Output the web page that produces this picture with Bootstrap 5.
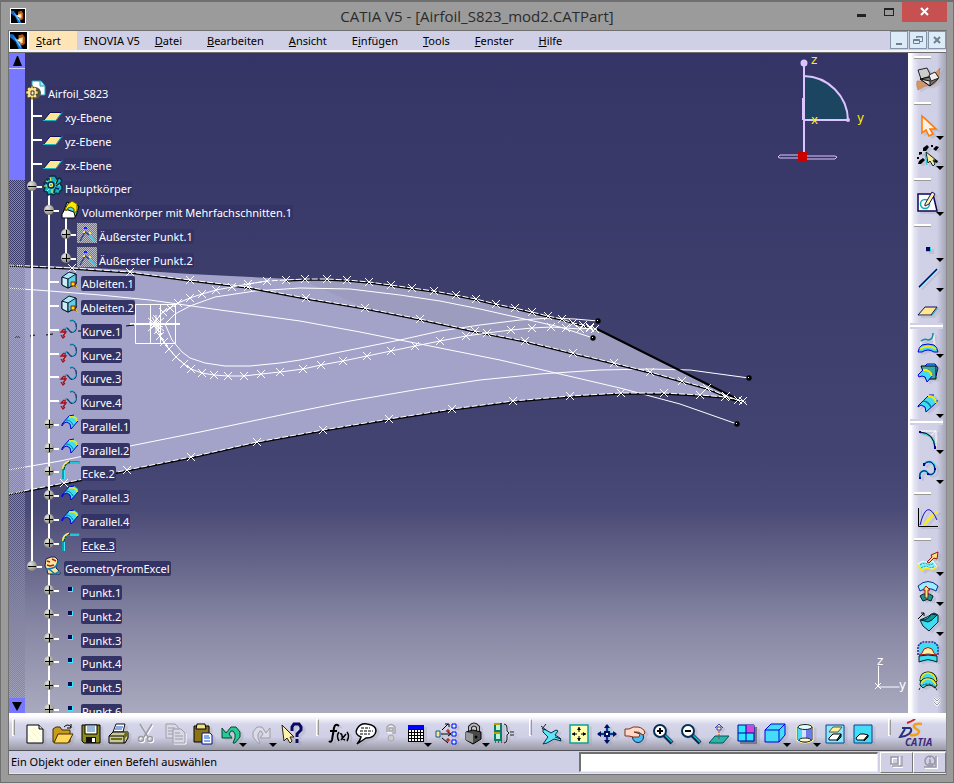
<!DOCTYPE html>
<html lang="de">
<head>
<meta charset="utf-8">
<meta name="viewport" content="width=device-width, initial-scale=1">
<title>CATIA V5 - [Airfoil_S823_mod2.CATPart]</title>
<link rel="stylesheet" href="https://cdn.jsdelivr.net/npm/bootstrap@5.3.0/dist/css/bootstrap.min.css">
<style>
:root{--lav:#cfcfe5;--navy:#333366;--frame:#9b9b9b}
body{font-family:"Noto Sans","Open Sans",sans-serif;font-size:11px;line-height:16px;color:#000;background:var(--frame)}
button{color:inherit;font:inherit}
symbol{overflow:visible}
.app-window{border:1px solid #6f6f6f;border-top-width:2px;background:var(--frame);padding:0 6px 7px 7px}
.titlebar{height:28px}
.titlebar h1{font:15px/28px "Open Sans",sans-serif;color:#2b2b2b;padding-left:80px}
.app-mark{width:16px;height:16px;border:1px solid #fff;margin:6px 0 0 2px}
.win-ctl{height:20px;width:27px}
.win-close{width:45px;background:#c75050;color:#fff}
.client{border:1px solid #707070;border-right-color:#8a8a8a;background:var(--lav)}
.menubar{height:21px;background:var(--lav);border-bottom:2px solid #f4f4fa}
.menubar .menu-item{line-height:19px;padding:0 12px 0 13px;color:#000;text-decoration:none}
.menubar .menu-item.active{background:#ffe4b5;padding:0 16px 0 7px}
.menubar .menu-item.tight{padding:0 2px 0 7px}
.mdi-group{gap:1px}
.mdi{width:18px;height:18px;border:1px solid #8596a8;background:#dcebf7}
.work{border-top:1px solid #6d6d6d}
.viewport{background:linear-gradient(#343466 0%,#3d3d6c 33%,#444473 62%,#4a4a77 69%,#6b6b8f 79%,#8888a5 87%,#a9a9bf 100%)}
.scene{left:0;top:0}
.scroller{width:16px;background:conic-gradient(#7a7aff 25%,transparent 0 50%,#7a7aff 0 75%,transparent 0) 0 0/2px 2px}
.scroller button{height:15px;background:#7777ff;border:0}
.scroller .thumb{height:112px;background:#7777ff;border-top:1px solid #d0d0ff}
.tree{padding:29px 0 0 1px}
.tree li{height:24px}
.tree li:nth-child(4n){height:23px}
.rail,.elbow,.blank{width:17px;flex:none;align-self:stretch}
.rail{background:linear-gradient(#fff,#fff) 5px 0/2px 100% no-repeat}
.elbow{background:linear-gradient(#fff,#fff) 5px 0/2px 100% no-repeat,linear-gradient(#fff,#fff) 5px 9px/11px 2px no-repeat;padding:4px 0 0 1px}
.elbow.last{background-size:2px 10px,11px 2px}
.knob{width:10px;height:10px;border-radius:5px;background:linear-gradient(#000,#000) center/8px 1px no-repeat,radial-gradient(circle at 35% 30%,#e4e4dc,#999990 60%,#66665e)}
.knob.plus{background:linear-gradient(#000,#000) 1px 5px/8px 1px no-repeat,linear-gradient(#000,#000) 5px 1px/1px 8px no-repeat,radial-gradient(circle at 35% 30%,#e4e4dc,#999990 60%,#66665e)}
.node-icon{width:21px;height:24px;flex:none;overflow:visible}
.node-open{background:linear-gradient(#fff,#fff) 5px 16px/2px 8px no-repeat}
.node-label{margin-top:4px;height:15px;padding:0 1px;border-radius:2px;background:var(--navy);color:#fff;white-space:nowrap}
.sidebar{width:38px;padding-left:2px;background:linear-gradient(90deg,#fff 0 3px,#e6e6f4 6px,#d0d0e6 12px,#cfcfe6 29px,#a5a5b9 38px)}
.tool{position:relative;width:28px;height:30px;flex:none}
.tool svg{width:22px;height:22px;display:block;margin:auto;overflow:visible;filter:drop-shadow(3px 2px 0 rgba(140,140,150,.22))}
.tool.grey svg{filter:none}
.tool.slim{width:22px}
.first-tool{height:34px}
.drop::after{content:"";position:absolute;right:-2px;bottom:2px;border:4px solid transparent;border-top-color:#000;border-bottom:0}
.sidebar .drop::after{bottom:1px}
.grip-h{height:16px;flex:none;display:flex;align-items:center;padding-left:4px}
.grip-h::before{content:"";width:17px;height:3px;background:#fff;border-bottom:1px solid #999}
.grip-top{height:8px}
.split-h{height:6px;flex:none;border-top:2px solid #cfcfe6;border-bottom:2px solid #cfcfe6;background:#fff;width:33px}
.toolbar{height:38px;padding-top:6px;background:linear-gradient(#fff 0,#fff 3px,#d6d6ea 11px,#cfcfe5 24px,#9a9aa8 37px);border-bottom:1px solid #505058}
.toolbar .drop{margin-right:2px}
.grip-v{width:19px;flex:none;padding-left:11px}
.grip-v::before{content:"";display:block;width:3px;height:17px;border:1px solid #fff;border-right-color:#999}
.grip-first{width:12px;padding-left:3px}
.statusbar{height:23px;border-bottom:1px solid #e6e6f2}
.statusbar label{line-height:22px;padding-left:2px}
.cmd{width:299px;height:20px;border:1px solid #eee;border-top:2px solid #707070;border-left:2px solid #707070;background:#fff;border-radius:0}
.stat-btn{width:33px;height:21px;background:var(--lav);border:1px solid #fff;border-right-color:#777;border-bottom-color:#777}
.stat-first{margin-left:2px}
</style>
<script src="https://cdn.jsdelivr.net/npm/bootstrap@5.3.0/dist/js/bootstrap.bundle.min.js"></script>
</head>
<body>
<svg width="0" height="0" class="position-absolute" aria-hidden="true">
<defs>
<symbol id="comet" viewBox="0 0 16 16"><path fill="#000" d="M0 0h16v16H0z"/><path fill="#1668c8" d="M0 2h3l3 4 4 6 2 4H8L5 9 0 5z"/><path fill="#6fd0ff" d="M3 4l3 3 4 5v3L6 9z"/><path fill="#b3561c" d="M8 3l4-1 2 3v6l-3 2-3-4z"/><path fill="#ffcf7a" d="M8 6l4-1v5l-2 1z"/><path fill="#fff" d="M6 7h5v2H8z"/></symbol>
<symbol id="n-part"><path d="M6-1h9l4 5v9H9V6H6z" fill="#fff" stroke="#19a6bb"/><path d="M14-1v5h5" fill="#b8e8f0" stroke="#19a6bb"/><circle cx="9" cy="11" r="6" fill="#55554a"/><path d="M5 4h2v2l2-1 2 2-1 2h2v3h-2l1 3-2 1-2-1v2H5v-2l-3 1-1-2 1-2H0V9h2L1 7l2-2 2 1z" fill="#ffe48a" stroke="#3d3208" stroke-width=".6"/><path d="M5 9h3v4H5z" fill="#fff6c0" stroke="#333"/></symbol>
<symbol id="n-plane"><path d="M1 14L7 7h11l-5 7z" fill="#ffe68f"/><path d="M1 14L7 6.500h11" fill="none" stroke="#111155"/><path d="M0 14.500h13l6-8" fill="none" stroke="#13b5c6"/></symbol>
<symbol id="n-body"><path d="M7-1h5l2 3 3-1 2 3-2 3 2 2v4l-2 1-1 3-3-1-2 2-3-1-3 1-1-3-3-1 1-4-1-4h3V2h3z" fill="#17b5b8" stroke="#06304e" stroke-width="1.500"/><path d="M7 0l1 4M3 4l4 2M1 9h4M4 14l3-3M9 16v-4M14 3l-2 4M17 8h-4" stroke="#fff25a" fill="none"/><path d="M15 2l-2 5M17 6l-4 3M16 12l-4-1M11 16l1-4" stroke="#042a56" fill="none" stroke-width="1.500"/><circle cx="8" cy="8" r="3" fill="#ffe94f" stroke="#042a56" stroke-width="1.500"/><circle cx="8" cy="8" r="1" fill="#2aa"/></symbol>
<symbol id="n-loft"><path d="M7 1l8 3 4 1-3 10H2z" fill="#3fd9f0" stroke="#000"/><path d="M2 13l3-5 9 3 1 4v2H2z" fill="#fff" stroke="#000"/><path d="M5 8l3-5 4-3 5 3v7l-3 2V8l-3-2-3 1-2 3z" fill="#ffe600" stroke="#665800"/></symbol>
<symbol id="n-extremum"><path d="M0-2h20v20H0z" fill="url(#dither)" shape-rendering="crispEdges"/><path d="M3 16L8 7l10 8" fill="none" stroke="#32408a" stroke-width="1.500"/><path d="M12 10l6 6" stroke="#39d1ef" stroke-width="2"/><path d="M6 6h2v2H6zM12 7h2v2h-2z" fill="#ffe26d"/><path d="M7 2h3v2H7z" fill="#1a1aff"/></symbol>
<pattern id="dither" width="2" height="2" patternUnits="userSpaceOnUse"><path fill="#777787" d="M0 0h2v2H0z"/><path fill="#bcbcc4" d="M0 0h1v1H0zM1 1h1v1H1z"/></pattern>
<symbol id="n-derive"><path d="M2 5l7-5 7 2v10l-8 4-6-3z" fill="#a9e6f6" stroke="#001828"/><path d="M2 5l6 2v9l-6-3z" fill="#cdeef6" stroke="#001828"/><path d="M8 7l8-5v10l-8 4z" fill="#5fcfee" stroke="#001828"/><path d="M11 10h4v4h-4z" fill="#ffe100" stroke="#7d1d00"/><path d="M14 13l4 4" stroke="#c10"/><path d="M16 14l2 3" stroke="#fd0"/></symbol>
<symbol id="n-curve"><path d="M10 1q4-2 6 3 1 5-1 7-4 3-6-1-2-3-4-1" fill="none" stroke="#12336e" stroke-width="1.300"/><path d="M10 0q5-1 6 3M16 7q-1 5-4 5M5 9l2-1" fill="none" stroke="#26c5df"/><path d="M4 9l-3 3h5l-3 4M1 15l2 3 2-2M5 9v3" fill="none" stroke="#a31019" stroke-width="1.300"/></symbol>
<symbol id="n-parallel"><path d="M2 9L9 1l5-1 4 3v3l-7 8-1-5-3-2-3 1z" fill="#3fdcf4"/><path d="M18 6l-7 8-1-5-3-2-3 1-2 3v-2L9 1l5-1" fill="none" stroke="#0000d8"/><path d="M9 2q7-1 8 4" fill="none" stroke="#ffe600" stroke-width="1.500"/><path d="M6 5q5 0 7 5" fill="none" stroke="#087b96"/></symbol>
<symbol id="n-corner"><path d="M3.500 17V6q1-5 5-5.500h11" fill="none" stroke="#0c9fa6" stroke-width="3"/><path d="M4.500 17V7M10 1h9" fill="none" stroke="#3ee8ff"/><path d="M3 7Q3 1 9-.5" fill="none" stroke="#ffe86e" stroke-width="2"/><path d="M4 8q0-6 6-8" fill="none" stroke="#111" stroke-dasharray="3 1"/></symbol>
<symbol id="n-set"><path d="M3 2l5-2h4l3 3-2 8 4 4v2H5l-1-4-2-4z" fill="#ffe49b" stroke="#17204e"/><path d="M4 4l3 1M9 2l4 2M4 8l3 1 4-1" fill="none" stroke="#b11f1f" stroke-width="1.500"/><path d="M3 12q7 0 10-3l4-7M6 12l6 5 5-3" fill="none" stroke="#0c7cad" stroke-width="1.500"/></symbol>
<symbol id="n-point"><path d="M8 6h5v5H8z" fill="#3ee8ff"/><path d="M8 6h4v4H8z" fill="#0b0b55"/></symbol>
<marker id="cross" viewBox="-5 -5 10 10" refX="0" refY="0" markerWidth="10" markerHeight="10" markerUnits="userSpaceOnUse"><path d="M-4-4L4 4M-4 4L4-4" stroke="#fff" fill="none"/></marker>
<marker id="blob" viewBox="-4 -4 8 8" refX="0" refY="0" markerWidth="8" markerHeight="8" markerUnits="userSpaceOnUse"><circle r="2.700"/><path fill="#fff" d="M-1-1h1v1h-1z"/></marker>
</defs>
</svg>

<div class="app-window vh-100 d-flex flex-column">
  <header class="titlebar d-flex align-items-start flex-shrink-0">
    <svg class="app-mark flex-shrink-0" viewBox="0 0 16 16" role="img" aria-label="CATIA"><use href="#comet"/></svg>
    <h1 class="m-0 flex-grow-1 text-center">CATIA V5 - [Airfoil_S823_mod2.CATPart]</h1>
    <div class="d-flex">
      <button class="win-ctl btn rounded-0 p-0 border-0" aria-label="Minimieren"><svg width="10" height="12" class="d-block m-auto"><path d="M0 8h9v3H0z" fill="#222"/></svg></button>
      <button class="win-ctl btn rounded-0 p-0 border-0" aria-label="Maximieren"><svg width="12" height="12" class="d-block m-auto"><path d="M1 2h10v8H1z" fill="#222"/><path d="M2 4h8v5H2z" fill="#9b9b9b"/></svg></button>
      <button class="win-ctl win-close btn rounded-0 p-0 border-0" aria-label="Schließen"><svg width="10" height="10" class="d-block m-auto"><path d="M1 1l7 7M8 1L1 8" stroke="#fff" stroke-width="2"/></svg></button>
    </div>
  </header>

  <div class="client flex-grow-1 d-flex flex-column overflow-hidden">
    <nav class="menubar d-flex align-items-stretch flex-shrink-0" aria-label="Hauptmenü">
      <svg width="20" height="19" viewBox="0 0 20 19" role="img" aria-label="Dokument"><path fill="#fff" d="M0 0h20v19H0z"/><use href="#comet" x="1" y="1" width="17" height="17"/></svg>
      <a class="menu-item active" href="#"><u>S</u>tart</a>
      <a class="menu-item tight" href="#">ENOVIA V5</a>
      <a class="menu-item" href="#"><u>D</u>atei</a>
      <a class="menu-item" href="#"><u>B</u>earbeiten</a>
      <a class="menu-item" href="#"><u>A</u>nsicht</a>
      <a class="menu-item" href="#">E<u>i</u>nfügen</a>
      <a class="menu-item" href="#"><u>T</u>ools</a>
      <a class="menu-item" href="#"><u>F</u>enster</a>
      <a class="menu-item" href="#"><u>H</u>ilfe</a>
      <div class="mdi-group ms-auto d-flex">
        <button class="mdi p-0" aria-label="Dokument minimieren"><svg width="12" height="12" class="d-block m-auto"><path d="M3 9h6v2H3z" fill="#6d8191"/></svg></button>
        <button class="mdi p-0" aria-label="Dokument wiederherstellen"><svg width="12" height="12" class="d-block m-auto" fill="none" stroke="#6d8191"><path d="M4.500 4V2.500h6v5H8M4 3h7"/><path d="M1.500 5.500h6v4h-6zM1 6.500h7"/></svg></button>
        <button class="mdi p-0" aria-label="Dokument schließen"><svg width="12" height="12" class="d-block m-auto"><path d="M3 3l6 6M9 3L3 9" stroke="#6d8191" stroke-width="2"/></svg></button>
      </div>
    </nav>

    <div class="work flex-grow-1 d-flex overflow-hidden">
      <main class="viewport position-relative flex-grow-1 d-flex overflow-hidden">
        <svg class="scene position-absolute w-100 h-100" viewBox="9 53 899 660" preserveAspectRatio="xMinYMin slice" role="img" aria-label="Tragflächenprofil S823">
          <path d="M8 265L70 267 130 270 190 274 290 279 327 279 369 282 412 288 456 295 496 304 548 316 597 329 741 401 700 395 664 393 621 393 570 396 513 401 452 409 389 419 323 430 257 443 191 457 127 470 64 483 8 494z" fill="#a3a3c9"/>
          <path d="M300 279L369 282 456 295 548 316 597 329 741 401 650 373 573 353 475 331 365 308z" fill="#9c9cbf"/>
          <g fill="none" stroke="#fff">
            <polyline points="8,288 50,291 100,295 150,300 220,310 300,321 360,332 425,345 500,360 560,374 620,388 680,404 737,424" marker-end="url(#blob)"/>
            <polyline points="8,470 60,461 130,446 200,432 300,411 350,401 420,389 480,380 540,374 600,370 650,369 690,370 749,378" marker-end="url(#blob)"/>
            <path d="M593 338L560 327 520 318 480 309 440 301 400 295 350 289 300 288 255 291 215 297 190 306 175 314 165 324 172 340 182 352 190 358 205 363 225 366 250 366 280 363 300 360 350 350 400 340 440 331 480 325 520 320 550 318 575 319 598 321"/>
            <path d="M593 338l0 0M598 321l0 0" marker-start="url(#blob)" marker-end="url(#blob)"/>
            <path d="M135.500 304.500h40v39h-40zM150.500 304v39M160.500 304v39"/>
            <path d="M130 324h50" stroke-width="2"/>
            <path d="M148 318l16 13M148 331l16-13M156 315v18M149 322l14 5M152 317l7 12"/>
          </g>
          <path d="M597 329L741 401" stroke="#000" stroke-width="2"/>
          <g fill="none" stroke="#000" stroke-width="1.500">
            <polyline points="8,266 72,269 130,273 190,281 248,288 306,299 365,309 420,320 475,332 525,342 573,354 614,364 650,373 682,382 707,389 726,397 741,401"/>
            <polyline points="8,495 64,484 127,471 191,458 257,443 323,431 389,420 452,410 513,402 570,397 621,394 664,394 700,396 725,398 741,402"/>
            <polyline points="286,281 305,280 327,280 347,281 369,283 391,286 412,289 434,292 456,296 476,300 496,305 515,309 532,313 548,317 562,320 583,326 597,330"/>
            <path d="M15 337h5M30 336l5-1M46 335l7-1M78 331h3M126 326l8-1" stroke-width="1"/>
          </g>
          <g fill="none" stroke="#fff" stroke-dasharray="6 2" marker-mid="url(#cross)">
            <polyline points="8,265 72,268 130,272 190,280 248,287 306,298 365,308 420,319 475,331 525,341 573,353 614,363 650,372 682,381 707,388 726,396 738,400 743,401 746,402"/>
            <polyline points="8,494 64,483 127,470 191,457 257,442 323,430 389,419 452,409 513,401 570,396 621,393 664,393 700,395 725,397 738,400 743,401"/>
            <polyline points="248,284 267,281 286,280 305,279 327,279 347,280 369,282 391,285 412,288 434,291 456,295 476,299 496,304 515,308 532,312 548,316 562,319 573,323 583,325 590,327 595,329 597,329"/>
          </g>
          <g fill="none" stroke="#fff" marker-mid="url(#cross)">
            <polyline points="267,281 248,284 232,287 216,290 202,294 190,298 178,303 170,308 163,312 157,319 154,323 155,324 158,330 160,336 164,342 169,349 176,357 184,364 191,369 202,373 214,375 228,376 244,376 261,374 280,372 303,369 321,365 343,361 367,356 391,351 415,346 440,341 466,336 487,333 511,330 532,328 551,327 566,328 580,329 590,328 597,330"/>
          </g>
          <g stroke="#dcc4ff" fill="none" stroke-width="2">
            <path d="M804 76a45 45 0 0 1 44 44H804z" fill="#1c4562"/>
            <path d="M804 63V155M803 98v22"/><path d="M780 155h25l1 1h29l2 1-2 2h-30l-1-1h-24l-2-1z" stroke-width="1"/>
            <circle cx="804" cy="63" r="2.500" fill="#dcc4ff"/><circle cx="848" cy="120" r="1"/>
          </g>
          <path d="M798 152h9v9h-9z" fill="#c80000"/>
          <g fill="#ffee00" font-family="DejaVu Sans, sans-serif" font-size="12"><text x="811" y="64">z</text><text x="811" y="124">x</text><text x="857" y="122">y</text></g>
          <path d="M878.500 666v21h21M875 683l6 6M875 689l6-6" fill="none" stroke="#fff"/>
          <g fill="#fff" font-family="DejaVu Sans, sans-serif" font-size="12"><text x="877" y="665">z</text><text x="899" y="689">y</text></g>
        </svg>
        <div class="scroller position-relative d-flex flex-column flex-shrink-0">
          <button class="p-0" aria-label="Nach oben"><svg width="10" height="10" class="d-block m-auto"><path d="M5 0l1 0 4 10H1z"/></svg></button>
          <div class="thumb"></div>
          <button class="p-0 mt-auto" aria-label="Nach unten"><svg width="10" height="10" class="d-block m-auto"><path d="M0 1h10L5 10z"/></svg></button>
        </div>
        <ul id="spec-tree" class="tree list-unstyled m-0 position-relative" role="tree" aria-label="Strukturbaum"></ul>
      </main>

      <aside class="sidebar d-flex flex-column overflow-hidden" aria-label="Flächenkonstruktion">
        <span class="grip-h grip-top"></span>
        <button class="tool first-tool btn p-0 border-0 ms-1" aria-label="Generative Shape Design"><svg viewBox="0 0 22 22"><path d="M0 14q7 1 11-1 6-5 12-12-1 16-8 17-8 0-14 5-2-5-1-9z" fill="#d59562" stroke="#a86a3a" stroke-width=".5"/><path d="M1 3l9-2 4 8-10 3z" fill="#ccc" stroke="#222"/><path d="M3 12l10-2 8 2-8 7z" fill="#777" stroke="#111"/><path d="M12 8l6-3 4 6-8 3z" fill="#eee" stroke="#222"/><path d="M3 12l10 2v5z" fill="#ddd" stroke="#111"/></svg></button>
        <span class="grip-h"></span>
        <button class="tool drop btn p-0 border-0 ms-1" aria-label="Auswählen"><svg viewBox="0 0 22 22"><path d="M5 1v17l4-3 3 6 4-2-3-5h6z" fill="#fff0e4" stroke="#ff7800" stroke-width="1.500"/></svg></button>
        <button class="tool drop btn p-0 border-0 ms-1" aria-label="Auswahlfilter"><svg viewBox="0 0 22 22"><path d="M6 3l4-3 2 2-3 4H6zM16 4l3-3 3 1-3 4zM2 7h3v2l-3 1zM2 16l4-3 2 2-4 4H1zM0 12h2v2H0zM14 0h2v2h-2zM18 14l3 2-1 2-3-1z"/><path d="M9 7l2 11 2-2 3 5 2-2-2-4h3z" fill="#ffe99a" stroke="#05272f"/><path d="M8 8l2 12" stroke="#13c5d8"/></svg></button>
        <span class="grip-h"></span>
        <button class="tool drop btn p-0 border-0 ms-1" aria-label="Skizze"><svg viewBox="0 0 22 22"><path d="M1 3h15l4 17H1z" fill="#fff" stroke="#08085a" stroke-width="1.500"/><circle cx="8" cy="13" r="4.500" fill="none" stroke="#13aab2" stroke-width="1.500"/><path d="M8 13l7-12 3 2-6 10-4 2z" fill="#fff3a0" stroke="#111160"/></svg></button>
        <span class="grip-h"></span>
        <button class="tool drop btn p-0 border-0 ms-1" aria-label="Punkt"><svg viewBox="0 0 22 22"><path d="M9 10h5v5H9z" fill="#25d9ee"/><path d="M9 10h4v4H9z" fill="#08085a"/></svg></button>
        <button class="tool drop btn p-0 border-0 ms-1" aria-label="Linie"><svg viewBox="0 0 22 22"><path d="M2 21L20 3" stroke="#13c5e0"/><path d="M2 20L20 2" stroke="#08085a" stroke-width="1.500"/></svg></button>
        <button class="tool btn p-0 border-0 ms-1" aria-label="Ebene"><svg viewBox="0 0 22 22"><path d="M1 18L8 10h12l-6 8z" fill="#ffe68f" stroke="#111155"/><path d="M1 18.500h14l6-8" fill="none" stroke="#13b5c6"/></svg></button>
        <span class="split-h"></span>
        <button class="tool drop btn p-0 border-0 ms-1" aria-label="Extrudieren"><svg viewBox="0 0 22 22"><path d="M4 14V9M17 2v12" fill="none" stroke="#fff"/><path d="M4 8q4-3 7-1 5 0 5-7" fill="none" stroke="#148f98" stroke-width="1.500"/><path d="M1 19q1-5 4-7 6-2 12 0 3 2 4 7h-4q-6-4-12 0z" fill="#3fdcf4" stroke="#0000d0"/><path d="M3 16q8-5 16 0" fill="none" stroke="#ffe600" stroke-width="2"/></svg></button>
        <button class="tool btn p-0 border-0 ms-1" aria-label="Offset"><svg viewBox="0 0 22 22"><path d="M8 3l2-2h8l3 4-2 8z" fill="#3fdcf4" stroke="#0000d0"/><path d="M4 3h15v13H9z" fill="#3aa9a9" stroke="#000"/><path d="M1 12l5-5h6l4 5-6 7-2-5-3-1-3 1z" fill="#3fdcf4" stroke="#0000d0"/><path d="M6 7q7-1 9 6" fill="none" stroke="#ffe600" stroke-width="2"/></svg></button>
        <button class="tool drop btn p-0 border-0 ms-1" aria-label="Übergang"><svg viewBox="0 0 22 22"><path d="M1 13L12 2l5 1 3 3v3L9 19l-1-5-4-2-3 2z" fill="#3fdcf4"/><path d="M20 7v2L9 19l-1-5-4-2-3 2v-1L12 2h5" fill="none" stroke="#0000d0"/><path d="M11 3q7 0 8 7" fill="none" stroke="#ffe600" stroke-width="2"/><path d="M6 8q5 0 8 6" fill="none" stroke="#087b96" stroke-width="1.500"/></svg></button>
        <span class="split-h"></span>
        <button class="tool drop btn p-0 border-0 ms-1" aria-label="Kreisbogen"><svg viewBox="0 0 22 22"><path d="M3 2h16v16M13 7l6-5" fill="none" stroke="#fff"/><path d="M3 4q14 0 15 15" fill="none" stroke="#3cd" stroke-width="2"/><path d="M3 3q14 1 15 16" fill="none" stroke="#000"/><path d="M2 2h2v2H2zM17 17h2v3h-2z" fill="#00a"/></svg></button>
        <button class="tool drop btn p-0 border-0 ms-1" aria-label="Spline"><svg viewBox="0 0 22 22"><path d="M3 19q-1-6 3-7 4-1 5 3 6 2 7-4 0-6-4-8-6-1-7 4" fill="none" stroke="#19b9e6" stroke-width="2"/><path d="M3 19q-1-6 3-7 4-1 5 3 6 2 7-4 0-6-4-8-6-1-7 4" fill="none" stroke="#000a66"/><path d="M2 18h2v2H2zM6 4h2v3H6zM10 14h2v2h-2zM17 9h2v2h-2z" fill="#00a"/></svg></button>
        <span class="grip-h"></span>
        <button class="tool btn p-0 border-0 ms-1" aria-label="Gesetz"><svg viewBox="0 0 22 22"><path d="M2 21h4Q14 11 21 6" fill="none" stroke="#ffee00" stroke-width="2"/><path d="M3 20Q10-8 20 15" fill="none" stroke="#1010c0"/><path d="M1.500 3v18.500H21" fill="none" stroke="#000"/></svg></button>
        <span class="grip-h"></span>
        <button class="tool drop btn p-0 border-0 ms-1" aria-label="Verschieben"><svg viewBox="0 0 22 22"><path d="M1 13q4-4 7-2t8-1l4 6q-5 3-8 1t-7 3z" fill="#8beef8" stroke="#fff"/><path d="M3 14q4-3 7-1t7-1M4 17q4-3 7-1t7-1" stroke="#0a9ab0" fill="none" stroke-dasharray="2 1"/><path d="M1 14l4 6q4-4 7-2t8-2" fill="none" stroke="#ffe600" stroke-width="1.500"/><path d="M10 11l5-5-1-2 7-3-1 7-3-1-5 5z" fill="#ffe27a" stroke="#a01010"/></svg></button>
        <button class="tool drop btn p-0 border-0 ms-1" aria-label="Offset-Fläche"><svg viewBox="0 0 22 22"><path d="M1 5q10-9 20 0l-2 5q-8-5-16 0z" fill="#9deefa" stroke="#0a2a9a"/><path d="M3 15q6-5 13 0l-2 5q-4-3-8 0z" fill="#0c9a9a" stroke="#022"/><path d="M8 17V9H6l3-4 4 4h-2v8z" fill="#ffe27a" stroke="#a01010"/></svg></button>
        <button class="tool drop btn p-0 border-0 ms-1" aria-label="Trennen"><svg viewBox="0 0 22 22"><path d="M1 8l6-6M4 2h3v3" fill="none" stroke="#000"/><path d="M3 9l7-3 7-4 4 2v7l-9 9-6-5z" fill="#3fdcf4" stroke="#022"/><path d="M4 9q8 0 10-6l6 1q-5 6-9 7z" fill="#0c9a9a" stroke="#022"/></svg></button>
        <button class="tool btn p-0 border-0 ms-1" aria-label="Begrenzung"><svg viewBox="0 0 22 22"><path d="M2 2h18v18H2z" fill="#3fdcf4"/><path d="M1 14V5l4-4h12l4 4v9" fill="none" stroke="#0a2a9a" stroke-dasharray="2 1" stroke-width="1.500"/><path d="M2 14q3 0 5-6 4-3 8 0 2 6 5 6-9-2-18 0z" fill="#fff3a0" stroke="#c20f0f"/><path d="M2 15q9-2 18 0v6l-3-1q-6-3-12 0l-3 1z" fill="#3fdcf4" stroke="#022"/></svg></button>
        <button class="tool btn p-0 border-0 ms-1" aria-label="Wiederholen"><svg viewBox="0 0 22 22"><path d="M3 10Q3 1 11 1q8 0 9 9l-3 3q-5-5-10-1z" fill="#3fdcf4" stroke="#000"/><path d="M3 14Q3 7 11 7q7 0 9 7l-2 3q-6-6-12 0z" fill="#3fdcf4" stroke="#111"/><path d="M4 9q1-7 7-7t8 8M4 13q2-5 7-5t8 6" fill="none" stroke="#ffe600" stroke-width="1.500"/><path d="M2 19q2-6 9-6t9 7" fill="none" stroke="#222" stroke-dasharray="2 1"/></svg></button>
        <svg width="9" height="10" class="ms-auto me-1 flex-shrink-0"><path d="M1 1l3 3 3-3M1 5l3 3 3-3" fill="none" stroke="#fff" stroke-width="2"/><path d="M1 1l3 3 3-3M1 5l3 3 3-3" fill="none" stroke="#999"/></svg>
      </aside>
    </div>

    <div class="toolbar d-flex align-items-start flex-shrink-0" role="toolbar" aria-label="Standard">
      <span class="grip-v grip-first"></span>
      <button class="tool btn p-0 border-0" aria-label="Neu"><svg viewBox="0 0 22 22"><path d="M3 2h12l4 4v14H3z" fill="#fffff0" stroke="#000"/><path d="M15 2v4h4" fill="#ddd" stroke="#000"/><path d="M6 6l9 11M5 12l6 7M10 5l7 8" stroke="#fff7b0"/></svg></button>
      <button class="tool btn p-0 border-0" aria-label="Öffnen"><svg viewBox="0 0 22 22"><path d="M1 19V6l3-2h4l2 3h8v12z" fill="#c99a1d" stroke="#3e2f00"/><path d="M2 20L6 11h15l-5 9z" fill="#ffd75a" stroke="#3e2f00"/><path d="M12 4q4-4 7 0M19 1v4h-4" fill="none" stroke="#000"/></svg></button>
      <button class="tool btn p-0 border-0" aria-label="Sichern"><svg viewBox="0 0 22 22"><path d="M2 2h18v18H4l-2-2z" fill="#8b8b1a" stroke="#000"/><path d="M5 2h12v9H5z" fill="#fff" stroke="#000"/><path d="M7 4h8M7 6h8M7 8h8" stroke="#37b"/><path d="M6 14h10v6H6z" fill="#111"/><path d="M12 15h3v4h-3z" fill="#fff"/></svg></button>
      <button class="tool btn p-0 border-0" aria-label="Drucken"><svg viewBox="0 0 22 22"><path d="M5 9L8 1h9l-2 8z" fill="#fff" stroke="#111"/><path d="M8 4h7M7 6h7" stroke="#1a50d0"/><path d="M1 13l4-4h15v6l-3 5H1z" fill="#c9c89a" stroke="#000"/><path d="M1 13h15v7M16 13l4-4" fill="none" stroke="#000"/><path d="M3 16h11" stroke="#6b7016" stroke-width="2"/><path d="M16 11l4-3v4l-4 4z" fill="#6b7016"/></svg></button>
      <button class="tool grey btn p-0 border-0" aria-label="Ausschneiden"><svg viewBox="0 0 22 22" fill="none"><g stroke="#fff" stroke-width="1.500"><path d="M5 2l8 13M17 2L9 15"/><circle cx="6" cy="17" r="2.500"/><circle cx="15" cy="17" r="2.500"/></g><g stroke="#9c9ca4" stroke-width="1.500" transform="translate(-1 -1)"><path d="M5 2l8 13M17 2L9 15"/><circle cx="6" cy="17" r="2.500"/><circle cx="15" cy="17" r="2.500"/></g></svg></button>
      <button class="tool grey btn p-0 border-0" aria-label="Kopieren"><svg viewBox="0 0 22 22" fill="#d8d8e8" stroke="#9c9ca4"><path d="M2 1h9l3 3v11H2z"/><path d="M4 5h7M4 8h8M4 11h8"/><path d="M9 6h8l4 4v10H9z" stroke="#fff" transform="translate(1 1)"/><path d="M9 6h8l4 4v10H9zM11 10h5M11 13h8M11 16h8"/></svg></button>
      <button class="tool btn p-0 border-0" aria-label="Einfügen"><svg viewBox="0 0 22 22"><path d="M2 3h15v16H2z" fill="#8b7318" stroke="#000"/><path d="M5 1h8l1 5H4z" fill="#f0e08a" stroke="#000"/><path d="M10 10h8l2 2v9H10z" fill="#fff" stroke="#001090"/><path d="M12 13h5M12 15h6M12 18h6" stroke="#15c"/></svg></button>
      <button class="tool drop btn p-0 border-0" aria-label="Widerrufen"><svg viewBox="0 0 22 22"><path d="M6 10l5-6h5l4 5v5l-5 6h-2l2-5v-4l-2-3h-2l-2 3 3 4H2V5z" fill="#27c995" stroke="#054432"/></svg></button>
      <button class="tool drop grey btn p-0 border-0" aria-label="Wiederholen"><svg viewBox="0 0 22 22"><path d="M16 10l-4-6H7L3 9v5l5 6h2l-2-5v-4l2-3h1l2 3-3 4h10V5z" fill="#dcdce8" stroke="#9c9ca4"/></svg></button>
      <button class="tool btn p-0 border-0" aria-label="Direkthilfe"><svg viewBox="0 0 22 22"><path d="M2 2l2 16 3-3 3 5 2-2-2-4h4z" fill="#fff1a8" stroke="#222"/><path d="M12 8V4l2-3h5l2 3v3l-4 4v3M17 16v4" fill="none" stroke="#0a0a66" stroke-width="3"/></svg></button>

      <span class="grip-v"></span>
      <button class="tool btn p-0 border-0" aria-label="Formel"><svg viewBox="0 0 22 22" fill="none" stroke="#000"><path d="M12 3q-4-3-5 2L5 17q-1 3-3 1M3 8h7" stroke-width="2"/><path d="M12 9q-3 4 0 9M20 9q3 4 0 9M13 11q2-1 2 2t3 4M19 11l-5 6" stroke-width="1.500"/></svg></button>
      <button class="tool btn p-0 border-0" aria-label="Kommentar"><svg viewBox="0 0 22 22"><path d="M6 14q-7-3-4-8Q5 0 12 1q9 1 9 7-1 7-10 7l-3 2-6 4q3-3 4-7z" fill="#fff" stroke="#000" stroke-width="1.500"/><path d="M6 5h9M5 8h13M5 11h10" stroke="#000" stroke-dasharray="3 1"/></svg></button>
      <button class="tool slim grey btn p-0 border-0" aria-label="Ampel"><svg viewBox="0 0 22 22"><path d="M8 3h6v7H8z" fill="#ddd" stroke="#fff"/><path d="M7 9V4q4-5 8 0v6h-3M9 5h4v3H9z" fill="none" stroke="#a5a5ae" stroke-width="1.500"/><circle cx="11" cy="15" r="3" fill="#ccc" stroke="#a5a5ae"/></svg></button>
      <button class="tool drop btn p-0 border-0" aria-label="Konstruktionstabelle"><svg viewBox="0 0 22 22" shape-rendering="crispEdges"><path d="M3 2h16v17H3z" fill="#fff"/><path d="M3 2h16v4H3z" fill="#00f"/><path d="M3.500 6v13M6.500 6v13M9.500 6v13M12.500 6v13M15.500 6v13M18.500 6v13M3 6.500h16M3 9.500h16M3 12.500h16M3 15.500h16M3 18.500h16" stroke="#000"/></svg></button>
      <button class="tool btn p-0 border-0" aria-label="Beziehungen"><svg viewBox="0 0 22 22"><path d="M1 8h4v6H1z" fill="#ffe68a" stroke="#0a5a9a"/><path d="M6 11h9M7 7l6-6M10 1h4v3M13 9l3 2-3 2M7 15l6 5" fill="none" stroke="#000"/><path d="M17 1h4v4h-4zM17 9h4v4h-4zM17 17h4v4h-4z" fill="#cff" stroke="#00f"/><path d="M13 6v4M11 8h4M13 15v4M11 17h4" stroke="#b00"/></svg></button>
      <button class="tool drop btn p-0 border-0" aria-label="Sperren"><svg viewBox="0 0 22 22"><path d="M7 9V4q4-5 8 0v5" fill="none" stroke="#222" stroke-width="4"/><path d="M7 9V4q4-5 8 0v5" fill="none" stroke="#bbb" stroke-width="2"/><path d="M3 9l7-2 8 2v7l-8 5-7-4z" fill="#4a4a4a" stroke="#000"/><path d="M3 9l7 2v9l-7-3z" fill="#999"/><circle cx="13" cy="14" r="1.500"/></svg></button>
      <button class="tool btn p-0 border-0" aria-label="Äquivalente Maße"><svg viewBox="0 0 22 22"><path d="M2 1h6v7H2zM2 10h6v7H2z" fill="#bff0d8" stroke="#0b7c6c" stroke-width="2"/><path d="M1 1h6M1 10h6" stroke="#b7a100" stroke-width="2"/><path d="M2 19h7" stroke="#000" stroke-dasharray="1 2"/><path d="M11 1q3 0 3 4v3l2 2-2 2v4q0 4-3 4M17 9h4M17 12h4" fill="none" stroke="#222"/></svg></button>

      <span class="grip-v"></span>
      <button class="tool btn p-0 border-0" aria-label="Flugmodus"><svg viewBox="0 0 22 22"><path d="M3 6l3 1 5 3 5-3 2 1-3 4 5 3 1 3-7-2-7 4-4 1 5-7-5-5z" fill="#5fe6f6" stroke="#06304e"/><path d="M1 3l5 4M2 6l4-5M15 14l6 2" stroke="#123"/></svg></button>
      <button class="tool btn p-0 border-0" aria-label="Alles einpassen"><svg viewBox="0 0 22 22"><path d="M2 2h18v18H2z" fill="#ffffb0" stroke="#0aa0a0" stroke-width="1.500"/><path d="M11 4v5M11 13v5M4 11h5M13 11h5" stroke="#000"/><path d="M11 4l2 3H9zM11 18l2-3H9zM4 11l3-2v4zM18 11l-3-2v4z"/></svg></button>
      <button class="tool btn p-0 border-0" aria-label="Schwenken"><svg viewBox="0 0 22 22"><path d="M11 2v18M2 11h18" stroke="#20c8dd" stroke-width="3"/><path d="M11 2v18M2 11h18" stroke="#0a0a66" stroke-width="1.500"/><path d="M8 8h6v6H8z" fill="#0a0a66"/><path d="M10 10h2v2h-2z" fill="#fff"/><path d="M11 1l3 4H8zM11 21l3-4H8zM1 11l4-3v6zM21 11l-4-3v6z" fill="#0a0a66"/></svg></button>
      <button class="tool btn p-0 border-0" aria-label="Drehen"><svg viewBox="0 0 22 22"><circle cx="14" cy="14" r="5.500" fill="#46bff0" stroke="#042a66"/><path d="M1 6h4q4-3 9-2 6 1 7 6l-2 2q-4-4-9-3l6 2-1 3H9l-4-1H1z" fill="#ffd9c8" stroke="#803018"/></svg></button>
      <button class="tool btn p-0 border-0" aria-label="Vergrößern"><svg viewBox="0 0 22 22"><path d="M12 12l8 8" stroke="#072b45" stroke-width="4"/><path d="M13 12l7 7" stroke="#1cb8e0" stroke-width="1.500"/><circle cx="8" cy="8" r="6" fill="#fff" stroke="#073055" stroke-width="2"/><path d="M5 8h6M8 5v6" stroke="#000" stroke-width="2"/></svg></button>
      <button class="tool btn p-0 border-0" aria-label="Verkleinern"><svg viewBox="0 0 22 22"><path d="M12 12l8 8" stroke="#072b45" stroke-width="4"/><path d="M13 12l7 7" stroke="#1cb8e0" stroke-width="1.500"/><circle cx="8" cy="8" r="6" fill="#fff" stroke="#073055" stroke-width="2"/><path d="M5 8h6" stroke="#000" stroke-width="2"/></svg></button>
      <button class="tool btn p-0 border-0" aria-label="Senkrechte Ansicht"><svg viewBox="0 0 22 22"><path d="M1 20l6-7h14l-6 7z" fill="#2ab5ac" stroke="#055"/><path d="M11 16V6" stroke="#c30" stroke-dasharray="2 1"/><path d="M7 5l4-4 4 4M9 4h4v3H9z" fill="#fff2a8" stroke="#1111b0" stroke-width=".8"/></svg></button>
      <button class="tool btn p-0 border-0" aria-label="Mehrfachansicht"><svg viewBox="0 0 22 22"><path d="M4 4h17v17H4z" fill="#777790"/><path d="M2 2h16v16H2z" fill="#2ee6ff" stroke="#0000a0"/><path d="M10 2h8v8h-8z" fill="#d048d8"/><path d="M10 2v16M2 10h16" stroke="#0000a0"/></svg></button>
      <button class="tool drop btn p-0 border-0" aria-label="Isometrische Ansicht"><svg viewBox="0 0 22 22"><path d="M1 7l6-6h14v11l-6 7H1zM1 7h14v12M15 7l6-6" fill="#45dcf8" stroke="#0000e0"/></svg></button>
      <button class="tool drop btn p-0 border-0" aria-label="Schattierung"><svg viewBox="0 0 22 22"><path d="M4 4q7-4 14 0v13q-7 4-14 0z" fill="#d8e0ff" stroke="#ffff9a" stroke-width="3"/><path d="M4 4q7-4 14 0v13q-7 4-14 0z" fill="#d8e0ff" stroke="#111177"/><path d="M4 5h4v13l-4-1z" fill="#45dcf8"/><path d="M12 6h5v11h-5z" fill="#6a7be8"/><ellipse cx="11" cy="4" rx="7" ry="2.500" fill="#dff" stroke="#223"/><ellipse cx="11" cy="17" rx="6" ry="2" fill="#fffbd0" stroke="#223"/></svg></button>
      <button class="tool btn p-0 border-0" aria-label="Verdecken/Anzeigen"><svg viewBox="0 0 22 22"><path d="M2 2h18v18H2z" fill="#8fe6fa" stroke="#0b4090"/><path d="M5 9l4-5h9l-4 5z" fill="#fff0a0" stroke="#652"/><path d="M5 15l4-4h8l-4 6-8 0z" fill="#fff" stroke="#000"/><path d="M13 17l4-6v3l-4 4z" fill="#085" stroke="#000"/></svg></button>
      <button class="tool btn p-0 border-0" aria-label="Sichtbaren Raum umschalten"><svg viewBox="0 0 22 22"><path d="M2 2h18v18H2z" fill="#45dcf8" stroke="#0b4090"/><path d="M4 15l4-4h4l4 1-4 5H5z" fill="#fffff0" stroke="#000"/><path d="M12 17l4-5v2l-4 4z" fill="#085" stroke="#000"/></svg></button>
      <span class="grip-v"></span>
      <svg width="46" height="32" viewBox="0 0 46 32" class="flex-shrink-0" role="img" aria-label="DS CATIA"><g transform="translate(-1 -3)"><path d="M12-1q7-1 8 2t-8 6" fill="none" stroke="#d81f26" stroke-width="2"/><path d="M7 12l8 0q3 2-1 6-4 3-9 3l5-8" fill="none" stroke="#27307d" stroke-width="2"/><path d="M27 8q-9-1-8 3l5 4q0 5-9 4" fill="none" stroke="#f0a01e" stroke-width="2.500"/></g><text x="9" y="27" font-family="Open Sans, sans-serif" font-size="10" font-weight="700" font-style="italic" fill="#3b2a80">CATIA</text></svg>
    </div>

    <footer class="statusbar d-flex align-items-center flex-shrink-0">
      <label for="cmd" class="flex-grow-1">Ein Objekt oder einen Befehl auswählen</label>
      <input id="cmd" class="cmd" type="text">
      <button class="stat-btn stat-first p-0" aria-label="Befehlsliste"><svg width="20" height="16" class="d-block m-auto" fill="none"><path d="M5 4h7v7H5zM15 3v10H6" stroke="#fff" stroke-width="2"/><path d="M4 3h7v7H4zM15 2v10H5" stroke="#9797a5" stroke-width="1.500"/></svg></button>
      <button class="stat-btn p-0" aria-label="Info"><svg width="20" height="16" class="d-block m-auto" fill="none"><path d="M17 3v11H5" stroke="#fff" stroke-width="2"/><circle cx="10" cy="7" r="5" stroke="#9797a5" stroke-width="1.500"/><path d="M9 6h1v4M8 10h5M9 3h2M16 2v11H4" stroke="#9797a5" stroke-width="1.500"/></svg></button>
    </footer>
  </div>
</div>

<script>
// Each node: rails in front of it, knob, icon, label.
// Rails: r = running line, b = blank, e = branch, l = last branch.
const nodes = [
  ['', '', 'part', 'Airfoil_S823', 1],
  ['e', '', 'plane', 'xy-Ebene'], ['e', '', 'plane', 'yz-Ebene'], ['e', '', 'plane', 'zx-Ebene'],
  ['e', '-', 'body', 'Hauptkörper', 1],
  ['re', '-', 'loft', 'Volumenkörper mit Mehrfachschnitten.1', 1],
  ['rre', '+', 'extremum', 'Äußerster Punkt.1'], ['rrl', '+', 'extremum', 'Äußerster Punkt.2'],
  ['re', '', 'derive', 'Ableiten.1'], ['re', '', 'derive', 'Ableiten.2'],
  ['re', '', 'curve', 'Kurve.1'], ['re', '', 'curve', 'Kurve.2'], ['re', '', 'curve', 'Kurve.3'], ['re', '', 'curve', 'Kurve.4'],
  ['re', '+', 'parallel', 'Parallel.1'], ['re', '+', 'parallel', 'Parallel.2'],
  ['re', '+', 'corner', 'Ecke.2'],
  ['re', '+', 'parallel', 'Parallel.3'], ['re', '+', 'parallel', 'Parallel.4'],
  ['rl', '+', 'corner', 'Ecke.3'],
  ['l', '-', 'set', 'GeometryFromExcel', 1],
  ['be', '+', 'point', 'Punkt.1'], ['be', '+', 'point', 'Punkt.2'], ['be', '+', 'point', 'Punkt.3'],
  ['be', '+', 'point', 'Punkt.4'], ['be', '+', 'point', 'Punkt.5'], ['be', '+', 'point', 'Punkt.6']
];
const cell = { r: 'rail', b: 'blank', e: 'elbow', l: 'elbow last' };
document.getElementById('spec-tree').innerHTML = nodes.map(([rails, knob, icon, label, open]) => {
  const cells = [...rails].map((c, i) => {
    const btn = knob && i === rails.length - 1
      ? `<button class="knob ${knob === '+' ? 'plus' : ''} d-block border-0 p-0" aria-label="${label} auf-/zuklappen"></button>` : '';
    return `<span class="${cell[c]}">${btn}</span>`;
  }).join('');
  const text = label === 'Ecke.3' ? `<u>${label}</u>` : label;
  return `<li class="d-flex align-items-start" role="treeitem">${cells}` +
    `<svg class="node-icon ${open ? 'node-open' : ''}" aria-hidden="true"><use href="#n-${icon}"/></svg>` +
    `<span class="node-label">${text}</span></li>`;
}).join('');
</script>
</body>
</html>
